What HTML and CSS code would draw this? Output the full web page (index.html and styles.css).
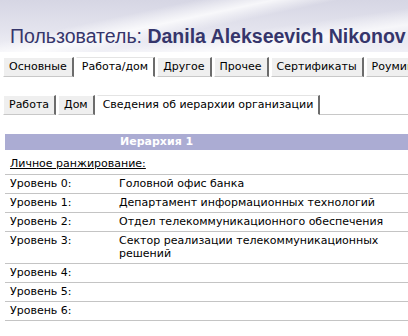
FILE: index.html
```html
<!DOCTYPE html>
<html lang="ru">
<head>
    <meta charset="UTF-8">
    <title>Пользователь</title>
    <link rel="stylesheet" href="styles.css">
</head>
<body>
    <div class="header">
        <h1>Пользователь: <b>Danila Alekseevich Nikonov</b></h1>
    </div>

    <div class="tabs main-tabs">
        <span class="tab">Основные</span>
        <span class="tab active">Работа/дом</span>
        <span class="tab">Другое</span>
        <span class="tab">Прочее</span>
        <span class="tab">Сертификаты</span>
        <span class="tab">Роуминг</span>
        <span class="tab-rest"></span>
    </div>

    <div class="tabs sub-tabs">
        <span class="tab">Работа</span>
        <span class="tab">Дом</span>
        <span class="tab active">Сведения об иерархии организации</span>
        <span class="tab-rest"></span>
    </div>

    <div class="section">
        <div class="section-title">Иерархия 1</div>
        <div class="caption">Личное ранжирование:</div>
        <table class="levels">
            <tr><td class="lbl">Уровень 0:</td><td>Головной офис банка</td></tr>
            <tr><td class="lbl">Уровень 1:</td><td>Департамент информационных технологий</td></tr>
            <tr><td class="lbl">Уровень 2:</td><td>Отдел телекоммуникационного обеспечения</td></tr>
            <tr><td class="lbl">Уровень 3:</td><td>Сектор реализации телекоммуникационных решений</td></tr>
            <tr><td class="lbl">Уровень 4:</td><td></td></tr>
            <tr><td class="lbl">Уровень 5:</td><td></td></tr>
            <tr><td class="lbl">Уровень 6:</td><td></td></tr>
        </table>
    </div>
</body>
</html>
```

FILE: styles.css
```css
body {
    margin: 0;
    font-family: "DejaVu Sans", Verdana, sans-serif;
    font-size: 11px;
    color: #000;
    background: #fff;
    overflow: hidden;
}

.header {
    height: 52px;
    padding-left: 10px;
    display: flex;
    align-items: flex-end;
    overflow: hidden;
    background:
        linear-gradient(168deg, rgba(255,255,255,0) 30%, rgba(255,255,255,0.8) 42%, rgba(255,255,255,0) 52%),
        linear-gradient(172deg, rgba(255,255,255,0) 60%, rgba(255,255,255,0.7) 75%, rgba(255,255,255,0) 90%),
        linear-gradient(180deg, #d6d6e4 0%, #e4e4ee 60%, #f0f0f6 100%);
}

.header h1 {
    margin: 0 0 4px;
    font-family: "Liberation Sans", Arial, sans-serif;
    font-size: 19.5px;
    font-weight: normal;
    color: #35356b;
    white-space: nowrap;
}

.header h1 b {
    font-weight: bold;
}

.tabs {
    display: flex;
    align-items: flex-end;
    white-space: nowrap;
}

.main-tabs {
    margin-top: 5px;
}

.sub-tabs {
    margin-top: 18px;
}

.tab {
    flex: none;
    padding: 2px 5px 3px;
    margin-left: 2px;
    background: #efefef;
    border-top: 1px solid #fff;
    border-left: 1px solid #fff;
    border-right: 2px solid #6c6c6c;
    border-bottom: 1px solid #c8c8c8;
}

.tab:first-child {
    margin-left: 3px;
}

.tab.active {
    background: #fff;
    border-top-color: #e4e4e4;
    border-bottom-color: #fff;
}

.tab-rest {
    flex: 1;
    border-bottom: 1px solid #c8c8c8;
}

.section {
    margin: 19px 0 0 5px;
}

.section-title {
    background: #abacd3;
    color: #fff;
    font-weight: bold;
    height: 16px;
    line-height: 16px;
    padding-left: 115px;
}

.caption {
    margin: 7px 0 0 5px;
    text-decoration: underline;
    line-height: 14px;
}

.levels {
    width: 100%;
    border-collapse: collapse;
    margin-top: 3px;
}

.levels td {
    border-top: 1px solid #c4c4c4;
    padding: 2px 0 3px 5px;
    vertical-align: top;
    line-height: 13px;
}

.levels tr:last-child td {
    border-bottom: 1px solid #c4c4c4;
}

.levels .lbl {
    width: 104px;
}
```
